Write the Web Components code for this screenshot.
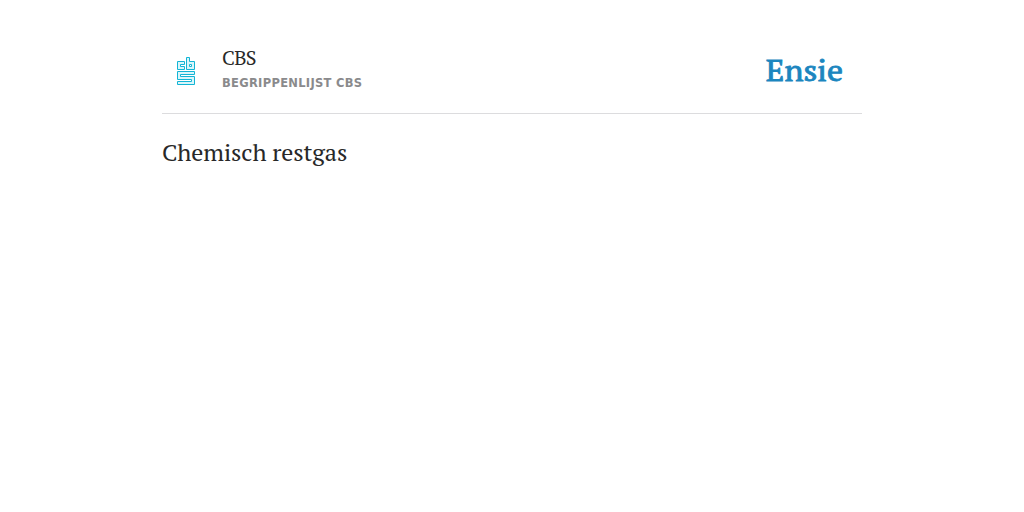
<!DOCTYPE html>
<html lang="nl">
<head>
<meta charset="utf-8">
<title>Chemisch restgas</title>
<style>
  body {
    margin: 0;
    background: #fff;
    color: #282828;
    font-family: "PT Serif", "Liberation Serif", serif;
  }
</style>
</head>
<body>
<ensie-page>
  <ensie-header slot="header">
    <cbs-logo slot="icon"></cbs-logo>
    <span slot="name">CBS</span>
    <span slot="list">Begrippenlijst CBS</span>
    <ensie-logo slot="brand">Ensie</ensie-logo>
  </ensie-header>
  <ensie-term>Chemisch restgas</ensie-term>
</ensie-page>

<script>
class EnsiePage extends HTMLElement {
  constructor() {
    super();
    this.attachShadow({ mode: "open" }).innerHTML = /* html */`
      <style>
        :host {
          display: block;
          width: 700px;
          margin: 0 auto;
          padding-top: 28px;
        }
      </style>
      <slot name="header"></slot>
      <slot></slot>
    `;
  }
}

class EnsieHeader extends HTMLElement {
  constructor() {
    super();
    this.attachShadow({ mode: "open" }).innerHTML = /* html */`
      <style>
        :host {
          display: flex;
          box-sizing: border-box;
          height: 86px;
          padding: 0 19px 0 15px;
          border-bottom: 1px solid #dcdcde;
        }
        .icon { width: 45px; padding-top: 29px; }
        .text { flex: 1; padding-top: 18px; }
        .name {
          font-size: 20px;
          line-height: 24px;
          letter-spacing: -0.7px;
        }
        .list {
          margin-top: 5px;
          color: #8a8a8c;
          font: bold 11.5px/16px "DejaVu Sans", sans-serif;
          letter-spacing: 0.3px;
          text-transform: uppercase;
        }
        .brand { padding-top: 20px; }
      </style>
      <div class="icon"><slot name="icon"></slot></div>
      <div class="text">
        <div class="name"><slot name="name"></slot></div>
        <div class="list"><slot name="list"></slot></div>
      </div>
      <div class="brand"><slot name="brand"></slot></div>
    `;
  }
}

class CbsLogo extends HTMLElement {
  constructor() {
    super();
    this.attachShadow({ mode: "open" }).innerHTML = /* html */`
      <style>
        :host { display: block; width: 18px; height: 28px; }
        svg { display: block; }
      </style>
      <svg width="18" height="28" fill="#d9f5fa" stroke="#12b5d5" fill-rule="evenodd">
        <path d="M.5 4.500H7.500V7.500H3.500V9.500H7.500V12.500H.5Z"/>
        <path d="M9.500 .5H12.500V4.500H17.500V12.500H9.500ZM12.500 7.500H14.500V9.500H12.500Z"/>
        <path d="M.5 14.500H17.500V17.500H3.500V19.500H17.500V27.500H.5V24.500H14.500V22.500H.5Z"/>
      </svg>
    `;
  }
}

class EnsieLogo extends HTMLElement {
  constructor() {
    super();
    this.attachShadow({ mode: "open" }).innerHTML = /* html */`
      <style>
        :host {
          display: block;
          color: #1b86bf;
          font-size: 32px;
          line-height: 42px;
          -webkit-text-stroke: 0.9px #1b86bf;
          transform: scaleY(0.93);
          transform-origin: 0 75%;
        }
      </style>
      <slot></slot>
    `;
  }
}

class EnsieTerm extends HTMLElement {
  constructor() {
    super();
    this.attachShadow({ mode: "open" }).innerHTML = /* html */`
      <style>
        :host { display: block; padding-top: 22px; }
        h1 {
          margin: 0;
          font-size: 24px;
          line-height: 32px;
          font-weight: normal;
          letter-spacing: -0.1px;
        }
      </style>
      <h1><slot></slot></h1>
    `;
  }
}

customElements.define("ensie-page", EnsiePage);
customElements.define("ensie-header", EnsieHeader);
customElements.define("cbs-logo", CbsLogo);
customElements.define("ensie-logo", EnsieLogo);
customElements.define("ensie-term", EnsieTerm);
</script>
</body>
</html>
